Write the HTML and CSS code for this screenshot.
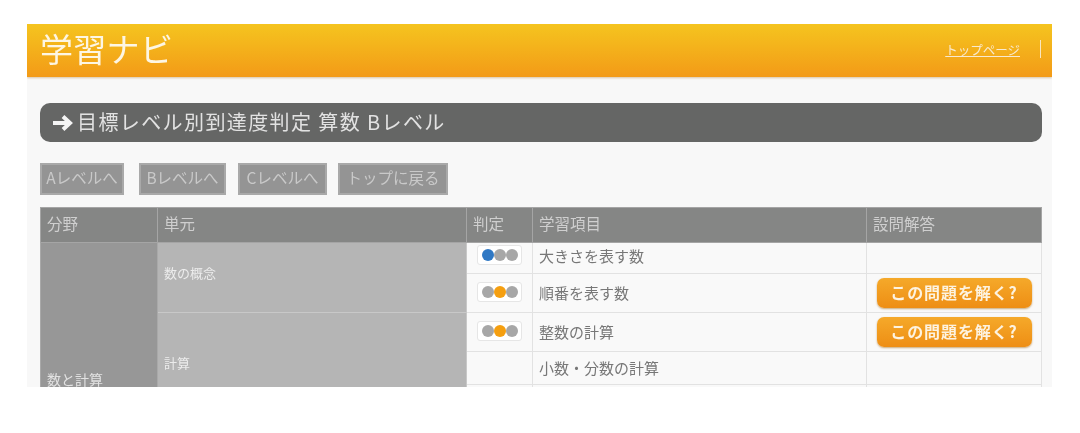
FILE: index.html
```html
<!DOCTYPE html>
<html lang="ja">
<head>
<meta charset="utf-8">
<title>学習ナビ</title>
<link rel="stylesheet" href="styles.css">
</head>
<body>
<div class="panel">
  <header class="top">
    <div class="logo">学習ナビ</div>
    <nav class="topnav"><a href="#">トップページ</a><span class="sep"></span></nav>
  </header>
  <main class="content">
    <h1 class="title">
      <svg class="arrow" width="22" height="18" viewBox="0 0 22 18"><path d="M1 9h16M11 2.5 18 9l-7 6.5" fill="none" stroke="#f4f4f4" stroke-width="4"/></svg>
      <span>目標レベル別到達度判定 算数 Bレベル</span>
    </h1>
    <div class="tabs">
      <a class="tab t-a" href="#">Aレベルへ</a>
      <a class="tab t-b" href="#">Bレベルへ</a>
      <a class="tab t-c" href="#">Cレベルへ</a>
      <a class="tab t-d" href="#">トップに戻る</a>
    </div>
    <table class="grid">
      <colgroup><col class="c1"><col class="c2"><col class="c3"><col class="c4"><col class="c5"></colgroup>
      <thead>
        <tr class="rh"><th>分野</th><th>単元</th><th>判定</th><th>学習項目</th><th>設問解答</th></tr>
      </thead>
      <tbody>
        <tr class="r1">
          <td class="field" rowspan="8">数と計算</td>
          <td class="unit unit-top" rowspan="2">数の概念</td>
          <td class="judge"><span class="lights"><i class="dot blue"></i><i class="dot"></i><i class="dot"></i></span></td>
          <td class="item">大きさを表す数</td><td class="ans"></td>
        </tr>
        <tr class="r2">
          <td class="judge"><span class="lights"><i class="dot"></i><i class="dot orange"></i><i class="dot"></i></span></td>
          <td class="item">順番を表す数</td><td class="ans"><a class="solve" href="#">この問題を解く?</a></td>
        </tr>
        <tr class="r2">
          <td class="unit" rowspan="3">計算</td>
          <td class="judge"><span class="lights"><i class="dot"></i><i class="dot orange"></i><i class="dot"></i></span></td>
          <td class="item">整数の計算</td><td class="ans"><a class="solve" href="#">この問題を解く?</a></td>
        </tr>
        <tr class="r3"><td class="judge"></td><td class="item">小数・分数の計算</td><td class="ans"></td></tr>
        <tr class="r3"><td class="judge"></td><td class="item">&nbsp;</td><td class="ans"></td></tr>
        <tr class="r3"><td class="unit"></td><td class="judge"></td><td class="item">&nbsp;</td><td class="ans"></td></tr>
        <tr class="r3"><td class="unit"></td><td class="judge"></td><td class="item">&nbsp;</td><td class="ans"></td></tr>
        <tr class="r3"><td class="unit"></td><td class="judge"></td><td class="item">&nbsp;</td><td class="ans"></td></tr>
      </tbody>
    </table>
  </main>
</div>
</body>
</html>
```
FILE: styles.css
```css
html, body { margin: 0; padding: 0; background: #fff; }
body {
  padding: 24px 0 0 27px;
  font-family: "Noto Sans CJK JP", "Liberation Sans", sans-serif;
}
.panel {
  width: 1025px;
  height: 363px;
  overflow: hidden;
  background: #f8f8f8;
  filter: blur(0.6px);
}
.top {
  height: 53px;
  display: flex;
  align-items: center;
  justify-content: space-between;
  background: linear-gradient(#f5c41f 0%, #f4b61c 35%, #f39a17 100%);
  box-shadow: 0 1px 2px #d9c4a4;
  padding: 0 11px 0 13px;
}
.logo {
  color: #fdf6e4;
  font-size: 33px;
  font-weight: 400;
  letter-spacing: 0.3px;
  line-height: 48px;
  padding-bottom: 5px;
}
.topnav { display: flex; align-items: center; gap: 20px; padding-bottom: 3px; }
.topnav a { color: #f8ead0; font-size: 12.5px; text-decoration: underline; }
.sep { width: 1px; height: 18px; background: #f8e6c0; }
.content { padding: 26px 10px 0 13px; }
.title {
  margin: 0;
  height: 39px;
  display: flex;
  align-items: center;
  gap: 3px;
  padding-left: 12px;
  border-radius: 10px;
  background: #656665;
  color: #e2e2e2;
  font-size: 20px;
  font-weight: 400;
  letter-spacing: 1.4px;
  line-height: 1;
}
.title span { padding-bottom: 2px; }
.tabs { display: flex; margin-top: 21px; height: 32px; }
.tab {
  box-sizing: border-box;
  display: flex;
  align-items: center;
  justify-content: center;
  height: 32px;
  padding-bottom: 5px;
  background: #949494;
  border: 2px solid #a9a9a9;
  color: #c9c9c9;
  font-size: 15.5px;
  white-space: nowrap;
  text-decoration: none;
}
.t-a { width: 84px; margin-right: 15px; }
.t-b { width: 87px; margin-right: 12px; }
.t-c { width: 89px; margin-right: 11px; }
.t-d { width: 110px; }
.grid {
  margin-top: 12px;
  width: 1001px;
  table-layout: fixed;
  border-collapse: collapse;
  font-size: 15px;
}
.c1 { width: 117px; }
.c2 { width: 309px; }
.c3 { width: 66px; }
.c4 { width: 334px; }
.c5 { width: 175px; }
.grid th {
  background: #858685;
  color: #cfcfcf;
  border: 1px solid #a5a5a5;
  font-size: 15.5px;
  font-weight: 400;
  text-align: left;
  padding: 0 6px 3px;
}
.rh { height: 35px; line-height: 1; }
.r1 { height: 31px; line-height: 1; }
.r2 { height: 39px; line-height: 1; }
.r3 { height: 33px; line-height: 1; }
.grid td { border: 1px solid #e2e2e2; padding: 0 6px 2px; }
.r1 .item { padding-bottom: 5px; }
.r1 .judge { padding-bottom: 6px; }
.grid .field { background: #979797; border-color: #a9a9a9; color: #e2e2e2; font-size: 14px; }
.grid .unit { background: #b5b5b5; border-color: #c8c8c8; color: #ececec; font-size: 13px; padding-bottom: 5px; }
.grid .unit-top { padding-bottom: 10px; }
.item { color: #777; background: #f9f9f9; }
.judge { text-align: center; background: #f9f9f9; }
.grid .ans { background: #f9f9f9; padding: 0; text-align: center; }
.lights {
  display: inline-flex;
  align-items: center;
  justify-content: center;
  width: 43px;
  height: 18px;
  background: #fff;
  border: 1px solid #e6e6e6;
  border-radius: 3px;
  vertical-align: middle;
}
.dot { width: 12px; height: 12px; border-radius: 50%; background: #a7a7a7; }
.dot.blue { background: #2f78c4; }
.dot.orange { background: #f59f10; }
.solve {
  display: inline-block;
  box-sizing: border-box;
  width: 155px;
  height: 30px;
  line-height: 28px;
  border-radius: 7px;
  background: linear-gradient(#f5a92a, #ee8e14);
  box-shadow: 0 1px 2px #c9a877;
  color: #fdf3e0;
  font-size: 16px;
  font-weight: 700;
  letter-spacing: 0.9px;
  text-decoration: none;
  vertical-align: middle;
}
```
